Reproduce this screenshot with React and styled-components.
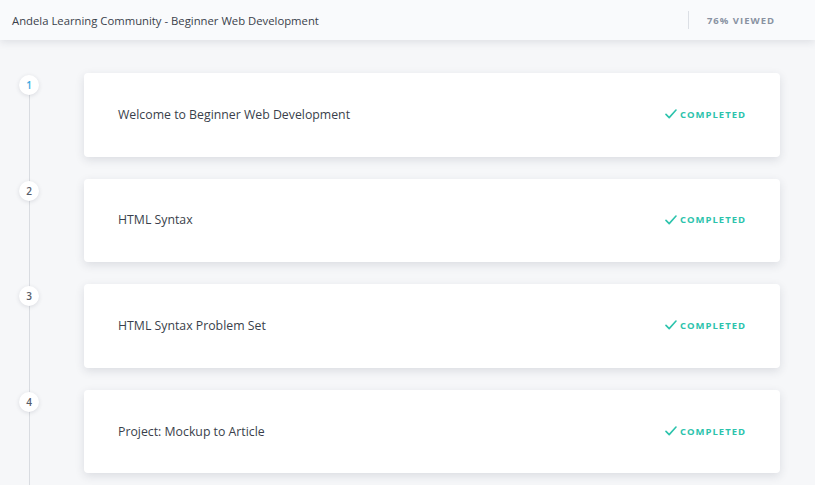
import styled, { createGlobalStyle } from "styled-components";

const GlobalStyle = createGlobalStyle`
  html, body {
    margin: 0;
    padding: 0;
    background: #f6f7f9;
    font-family: "Open Sans", "Liberation Sans", sans-serif;
    overflow: hidden;
  }
`;

const lessons = [
  { title: "Welcome to Beginner Web Development", current: true },
  { title: "HTML Syntax" },
  { title: "HTML Syntax Problem Set" },
  { title: "Project: Mockup to Article" },
];

const CheckIcon = () => (
  <svg width="12" height="10" viewBox="0 0 12 10" fill="none">
    <path
      d="M1 5.4 L4.2 8.6 L11 1"
      stroke="#2cc3ac"
      strokeWidth="1.6"
      strokeLinecap="round"
      strokeLinejoin="round"
    />
  </svg>
);

const App = () => {
  return (
    <>
      <GlobalStyle />
      <Page>
        <Header>
          <CourseTitle>Andela Learning Community - Beginner Web Development</CourseTitle>
          <Progress>76% VIEWED</Progress>
        </Header>
        <LessonList>
          {lessons.map((lesson, i) => (
            <LessonRow key={lesson.title} $last={i === lessons.length - 1}>
              <Rail $first={i === 0}>
                <StepNumber $current={lesson.current}>{i + 1}</StepNumber>
              </Rail>
              <LessonCard>
                <LessonTitle>{lesson.title}</LessonTitle>
                <Status>
                  <CheckIcon />
                  COMPLETED
                </Status>
              </LessonCard>
            </LessonRow>
          ))}
        </LessonList>
      </Page>
    </>
  );
};

export default App;

const Page = styled.div`
  width: 815px;
  height: 485px;
  overflow: hidden;
  background: #f6f7f9;
`;

const Header = styled.header`
  height: 40px;
  background: #f9fafc;
  display: flex;
  align-items: center;
  justify-content: space-between;
  padding: 0 40px 0 12px;
  box-shadow: 0 2px 8px rgba(40, 50, 70, 0.12);
  position: relative;
  z-index: 1;
`;

const CourseTitle = styled.div`
  font-size: 11.3px;
  color: #3a3f4b;
`;

const Progress = styled.div`
  height: 18px;
  display: flex;
  align-items: center;
  border-left: 1px solid #dcdfe5;
  padding-left: 18px;
  font-size: 9.5px;
  font-weight: 700;
  letter-spacing: 1px;
  color: #8992a2;
`;

const LessonList = styled.div`
  display: flex;
  flex-direction: column;
  padding: 33px 35px 0 19px;
`;

const LessonRow = styled.div`
  display: grid;
  grid-template-columns: 20px 1fr;
  column-gap: 45px;
  padding-bottom: ${({ $last }) => ($last ? "20px" : "22px")};
  position: relative;
`;

const Rail = styled.div`
  position: relative;
  display: flex;
  justify-content: center;
  &::before {
    content: "";
    position: absolute;
    left: 9.5px;
    top: ${({ $first }) => ($first ? "12px" : "-22px")};
    bottom: -22px;
    width: 1px;
    background: #d9dce1;
  }
`;

const StepNumber = styled.div`
  position: relative;
  margin-top: 2px;
  width: 20px;
  height: 20px;
  border-radius: 50%;
  background: #ffffff;
  box-shadow: 0 1px 4px rgba(40, 50, 70, 0.14);
  display: flex;
  align-items: center;
  justify-content: center;
  font-size: 10px;
  font-weight: 600;
  color: ${({ $current }) => ($current ? "#3aa8e0" : "#555b68")};
`;

const LessonCard = styled.div`
  height: 83.6px;
  background: #ffffff;
  border-radius: 4px;
  box-shadow: 0 3px 10px rgba(40, 50, 70, 0.13);
  display: flex;
  align-items: center;
  justify-content: space-between;
  padding: 0 34px 1px;
  box-sizing: border-box;
`;

const LessonTitle = styled.div`
  font-size: 12.3px;
  color: #3a3f4b;
`;

const Status = styled.div`
  display: flex;
  align-items: center;
  gap: 3px;
  font-size: 9.5px;
  font-weight: 700;
  letter-spacing: 1px;
  color: #2cc3ac;
`;
